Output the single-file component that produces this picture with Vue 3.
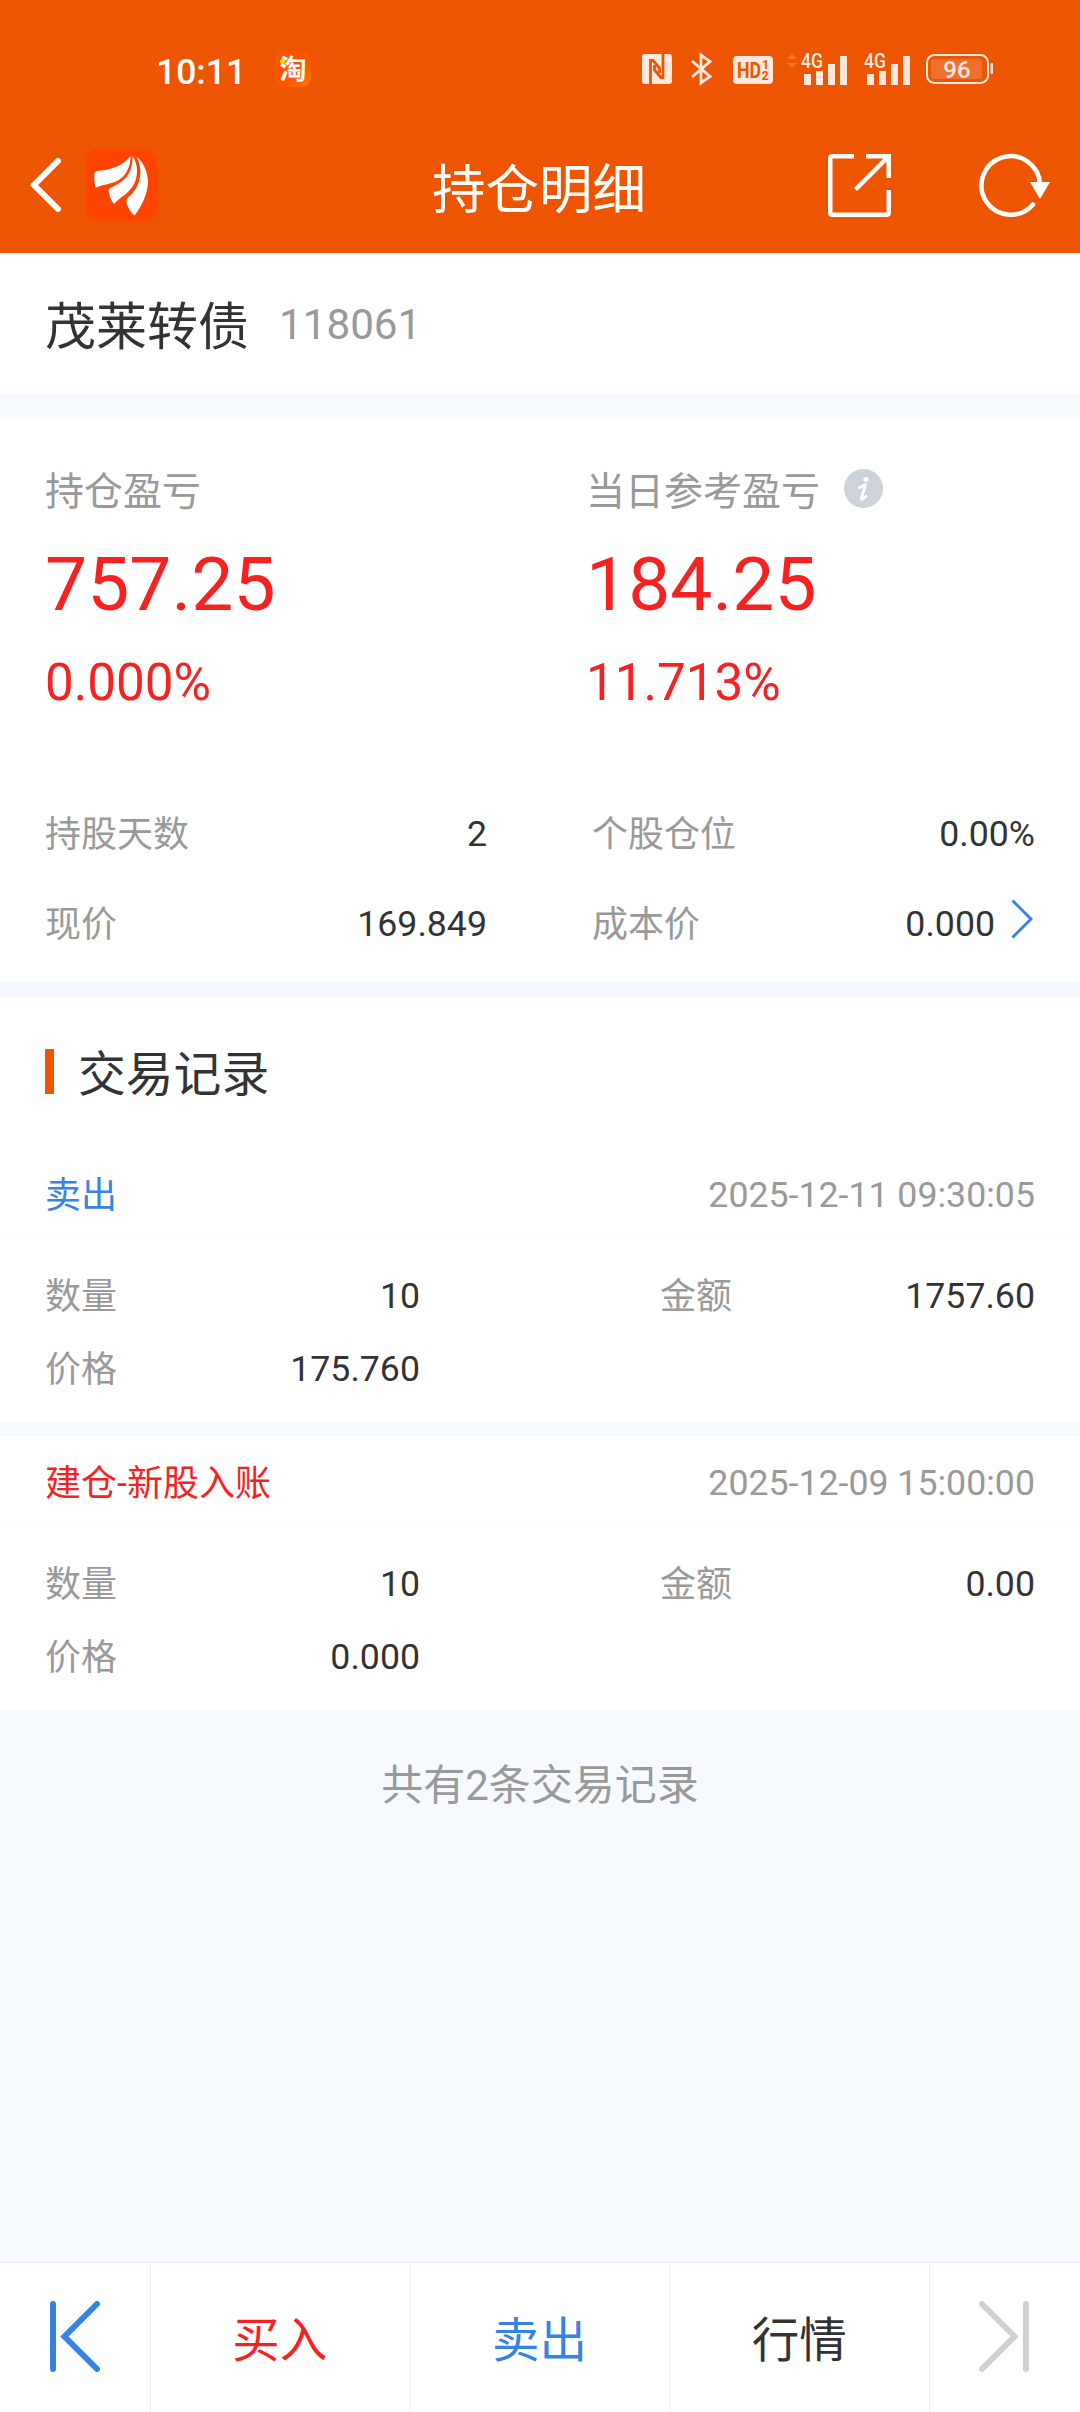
<template>
  <div class="page">
    <header class="header">
      <div class="status">
        <span class="time">10:11</span>
        <span class="tao">淘</span>
        <div class="status-icons">
          <svg class="nfc" viewBox="0 0 30 30">
            <rect width="30" height="30" rx="3" fill="#ffe9df" />
            <path d="M8.500 30V6.500L11 6.500L17.500 14V19M21 0V23.500H19L12.500 16V11" fill="none" stroke="#ee5500" stroke-width="2.800" />
          </svg>
          <svg class="bt" viewBox="0 0 21 34">
            <path d="M1 9L19 24.500L10 31V3L19 9.500L1 25" fill="none" stroke="#ffe9df" stroke-width="2.800" />
          </svg>
          <svg class="hd" viewBox="0 0 40 28">
            <rect width="40" height="28" rx="4" fill="#ffe9df" />
            <text x="4" y="21.500" font-size="22" textLength="24" lengthAdjust="spacingAndGlyphs">HD</text>
            <text x="29" y="13.300" font-size="12.500">1</text>
            <text x="28.500" y="24" font-size="12.500">2</text>
          </svg>
          <svg class="signal first" viewBox="0 -6 60 44">
            <path d="M5 1L10 6H0zM5 15L10 10H0z" fill="#f58a52" opacity=".6" />
            <text x="14" y="15" font-size="20.500" textLength="22" lengthAdjust="spacingAndGlyphs">4G</text>
            <path d="M17 21h7v11h-7zM29 18h7v14h-7zM41 11h7v21h-7zM53 3h7v29h-7z" />
          </svg>
          <svg class="signal second" viewBox="14 -6 46 44">
            <text x="14" y="15" font-size="20.500" textLength="22" lengthAdjust="spacingAndGlyphs">4G</text>
            <path d="M17 21h7v11h-7zM29 18h7v14h-7zM41 11h7v21h-7zM53 3h7v29h-7z" />
          </svg>
          <svg class="battery" viewBox="0 0 67 30">
            <rect x="1" y="1" width="61" height="28" rx="7.500" fill="none" stroke="#ffe9df" stroke-width="2" />
            <rect x="5" y="5" width="51" height="20" rx="3" fill="#f17030" />
            <rect x="64.500" y="9" width="2.500" height="11" rx="1" />
            <text x="31" y="23.500" font-size="24" text-anchor="middle">96</text>
          </svg>
        </div>
      </div>
      <nav class="nav">
        <div class="nav-left">
          <svg class="back" viewBox="0 0 31 56">
            <path d="M28 4L4 28L28 52" fill="none" stroke="#fff" stroke-width="6" stroke-linecap="round" />
          </svg>
          <svg class="logo" viewBox="0 0 72 72">
            <rect width="72" height="72" rx="13" fill="#ff4400" />
            <path d="M45.500 7C38 17 25 21 12 22Q9.500 22.500 9.300 25Q8.800 32 10.500 38.500C17 36 26 35 33 31.500C41 27 46 17 45.500 7Z" fill="#fff" />
            <path d="M47.500 7C48 25 39 33 26 38.500Q23 40 24 43.500Q25 50 29 55C34 49 43 45 48 37C54 27 53 15 47.500 7Z" fill="#fff" />
            <path d="M51.500 7.500C58 20 57 37 43 48.500Q41 50.500 41.500 54Q44 62 49.500 66.500C57 57 63 44 63 32C62 21 58 13 51.500 7.500Z" fill="#fff" />
          </svg>
        </div>
        <h1 class="title">持仓明细</h1>
        <div class="nav-right">
          <svg class="share" viewBox="0 0 63 63">
            <path d="M26 2.250H4.500Q2.250 2.250 2.250 4.500V58.500Q2.250 60.750 4.500 60.750H58.500Q60.750 60.750 60.750 58.500V36" />
            <path d="M38 2.250H60.750V24M60 3L27.500 35.500" />
          </svg>
          <svg class="refresh" viewBox="0 0 71 64">
            <path d="M61 31A29.300 29.300 0 1 0 54 51.500" fill="none" stroke="#fff" stroke-width="4.600" stroke-linecap="round" />
            <path d="M51 29H71L61 46Z" fill="#fff" />
          </svg>
        </div>
      </nav>
    </header>

    <section class="stock">
      <span class="stock-name">茂莱转债</span>
      <span class="stock-code">118061</span>
    </section>

    <section class="profit">
      <div class="profit-item">
        <div class="profit-label">持仓盈亏</div>
        <div class="profit-value">757.25</div>
        <div class="profit-rate">0.000%</div>
      </div>
      <div class="profit-item">
        <div class="profit-label">
          当日参考盈亏
          <svg class="info" viewBox="0 0 39 39">
            <circle cx="19.500" cy="19.500" r="19.500" fill="#cdd3d8" />
            <circle cx="22" cy="10.500" r="2.600" fill="#fff" />
            <path d="M15.500 18.500Q19 17 21.500 15.500L17.500 29Q17 32 22 27.500" fill="none" stroke="#fff" stroke-width="2.800" stroke-linecap="round" stroke-linejoin="round" />
          </svg>
        </div>
        <div class="profit-value">184.25</div>
        <div class="profit-rate">11.713%</div>
      </div>
    </section>

    <section class="detail">
      <div v-for="item in details" :key="item.label" class="cell">
        <span class="cell-label">{{ item.label }}</span>
        <span class="cell-value">{{ item.value }}</span>
        <svg v-if="item.link" class="arrow" viewBox="0 0 22 40">
          <path d="M1.500 1.500L20 20L1.500 38.500" fill="none" stroke="#3682e5" stroke-width="3" />
        </svg>
      </div>
    </section>

    <div class="section-title">
      <i class="mark"></i>
      <h2>交易记录</h2>
    </div>

    <section v-for="record in records" :key="record.time" class="record">
      <div class="record-head">
        <span class="record-name" :class="record.type">{{ record.name }}</span>
        <span class="record-time">{{ record.time }}</span>
      </div>
      <div class="record-body">
        <div v-for="item in record.items" :key="item.label" class="cell">
          <span class="cell-label">{{ item.label }}</span>
          <span class="cell-value">{{ item.value }}</span>
        </div>
      </div>
    </section>

    <p class="total">共有{{ records.length }}条交易记录</p>

    <footer class="tabbar">
      <button class="tab">
        <svg class="step" viewBox="0 0 50 71">
          <path d="M3 3V68M47 3L14.500 35.500L47 68" />
        </svg>
      </button>
      <button class="tab buy">买入</button>
      <button class="tab sell">卖出</button>
      <button class="tab">行情</button>
      <button class="tab" disabled>
        <svg class="step off" viewBox="0 0 50 71">
          <path d="M47 3V68M3 3L35.500 35.500L3 68" />
        </svg>
      </button>
    </footer>
  </div>
</template>

<script setup>
const details = [
  { label: '持股天数', value: '2' },
  { label: '个股仓位', value: '0.00%' },
  { label: '现价', value: '169.849' },
  { label: '成本价', value: '0.000', link: true }
]

const records = [
  {
    name: '卖出',
    type: 'sell',
    time: '2025-12-11 09:30:05',
    items: [
      { label: '数量', value: '10' },
      { label: '金额', value: '1757.60' },
      { label: '价格', value: '175.760' }
    ]
  },
  {
    name: '建仓-新股入账',
    type: 'buy',
    time: '2025-12-09 15:00:00',
    items: [
      { label: '数量', value: '10' },
      { label: '金额', value: '0.00' },
      { label: '价格', value: '0.000' }
    ]
  }
]
</script>

<style>
body {
  background: #f6faff;
}
</style>

<style scoped>
* {
  box-sizing: border-box;
}

.page {
  display: flex;
  flex-direction: column;
  width: 1080px;
  height: 2412px;
  overflow: hidden;
  background: #f6faff;
  color: #333;
  font-family: Roboto, "Noto Sans CJK SC", sans-serif;
  font-size: 36px;
  line-height: 40px;
}

svg {
  display: block;
  flex: none;
}

h1, h2, p {
  margin: 0;
  font-weight: 400;
}

/* header */
.header {
  height: 253px;
  background: #ee5500;
  color: #fff;
}

.status {
  display: flex;
  align-items: center;
  height: 118px;
  padding: 20px 87px 0 156px;
}

.time {
  width: 119px;
  padding-top: 6px;
  font-size: 35.5px;
  font-weight: 500;
}

.tao {
  position: relative;
  width: 36px;
  height: 36px;
  padding-top: 3px;
  border-radius: 9px;
  background: linear-gradient(135deg, #ff5500 60%, #ff7a00);
  font-size: 27px;
  font-weight: 700;
  line-height: 32px;
  text-align: center;
}

.tao::before {
  content: "";
  position: absolute;
  top: 8px;
  left: 5px;
  width: 5px;
  height: 5px;
  border-radius: 50%;
  background: #ffe600;
}

.status-icons {
  display: flex;
  align-items: center;
  margin-left: auto;
  fill: #ffe9df;
  font-weight: 500;
}

.nfc {
  width: 30px;
  height: 30px;
}

.bt {
  width: 21px;
  height: 34px;
  margin-left: 19px;
}

.hd {
  width: 40px;
  height: 28px;
  margin: 2px 0 0 21px;
  fill: #ee5500;
  font-weight: 700;
}

.signal {
  height: 44px;
}

.first {
  width: 60px;
  margin-left: 14px;
}

.second {
  width: 46px;
  margin-left: 17px;
}

.battery {
  width: 67px;
  height: 30px;
  margin-left: 16px;
}

.nav {
  display: grid;
  grid-template-columns: 1fr auto 1fr;
  align-items: center;
  height: 134px;
  padding: 0 30px;
}

.nav-left,
.nav-right {
  display: flex;
  align-items: center;
}

.nav-left {
  gap: 24px;
}

.nav-right {
  justify-content: flex-end;
  gap: 88px;
}

.back {
  width: 31px;
  height: 56px;
}

.logo {
  width: 72px;
  height: 72px;
}

.title {
  padding: 11px 2px 0 0;
  font-size: 53.5px;
  line-height: 60px;
}

.share {
  width: 63px;
  height: 63px;
  fill: none;
  stroke: #fff;
  stroke-width: 4.5;
}

.refresh {
  width: 71px;
  height: 64px;
}

/* stock name */
.stock {
  display: flex;
  height: 141px;
  padding: 42px 45px 0;
  background: #fff;
  line-height: 60px;
}

.stock-name {
  padding-top: 3px;
  font-size: 51px;
}

.stock-code {
  margin-left: 30px;
  color: #999;
  font-size: 42.2px;
}

/* profit and loss */
.profit {
  display: grid;
  grid-template-columns: 541px 1fr;
  height: 355px;
  margin-top: 23px;
  padding: 55px 0 0 45px;
  border-bottom: 1px solid #fbfcfe;
  background: #fff;
}

.profit-label {
  display: flex;
  align-items: center;
  gap: 24px;
  height: 40px;
  color: #999;
  font-size: 39px;
}

.info {
  width: 39px;
  height: 39px;
  margin-top: -7px;
}

.profit-value {
  margin-top: 34px;
  color: #f62222;
  font-size: 75px;
  line-height: 76px;
}

.profit-rate {
  margin-top: 35px;
  color: #f62222;
  font-size: 51.2px;
  line-height: 52px;
}

.detail {
  display: grid;
  grid-template-columns: 442px 443px;
  align-content: start;
  gap: 50px 105px;
  height: 210px;
  padding: 42px 45px 0;
  background: #fff;
}

.cell {
  display: flex;
  height: 40px;
}

.cell-label {
  padding-top: 1px;
  color: #999;
}

.cell-value {
  margin-left: auto;
  font-size: 35.7px;
}

.arrow {
  width: 22px;
  height: 40px;
  margin: -5px 2px 0 16px;
}

/* records */
.section-title {
  display: flex;
  align-items: center;
  gap: 24px;
  height: 151px;
  margin-top: 15px;
  padding-left: 45px;
  border-bottom: 1px solid #fbfcfe;
  background: #fff;
}

.mark {
  width: 9px;
  height: 45px;
  margin-top: -2px;
  background: #ee5500;
}

.section-title h2 {
  padding-top: 5px;
  font-size: 47.8px;
  line-height: 50px;
}

.record {
  background: #fff;
}

.record + .record {
  margin-top: 15px;
}

.record-head {
  display: flex;
  align-items: center;
  justify-content: space-between;
  height: 91px;
  padding: 4px 45px 0;
  border-bottom: 1px solid #f9fcff;
}

.record-name {
  padding-top: 2px;
}

.record-time {
  color: #999;
  font-size: 35.7px;
}

.record-body {
  display: grid;
  grid-template-columns: 375px 375px;
  gap: 33px 240px;
  padding: 37px 45px 32px;
}

.buy {
  color: #f62222;
}

.sell {
  color: #3682e5;
}

.total {
  padding-top: 52px;
  color: #999;
  font-size: 42px;
  line-height: 50px;
  text-align: center;
}

/* bottom bar */
.tabbar {
  display: grid;
  grid-template-columns: 151px 1fr 1fr 1fr 150px;
  height: 150px;
  margin-top: auto;
  border-top: 1px solid #e8e8e8;
  background: #fff;
}

.tab {
  display: flex;
  align-items: center;
  justify-content: center;
  padding: 0 1px 3px 0;
  border: none;
  border-right: 1px solid #eee;
  background: none;
  color: #333;
  font-family: inherit;
  font-size: 47.5px;
}

.tab.buy {
  color: #f62222;
}

.tab.sell {
  color: #3682e5;
}

.tab:last-child {
  border-right: none;
}

.step {
  width: 50px;
  height: 71px;
  fill: none;
  stroke: #3682e5;
  stroke-width: 6;
  stroke-linecap: round;
}

.off {
  stroke: #d0d0d0;
}
</style>
